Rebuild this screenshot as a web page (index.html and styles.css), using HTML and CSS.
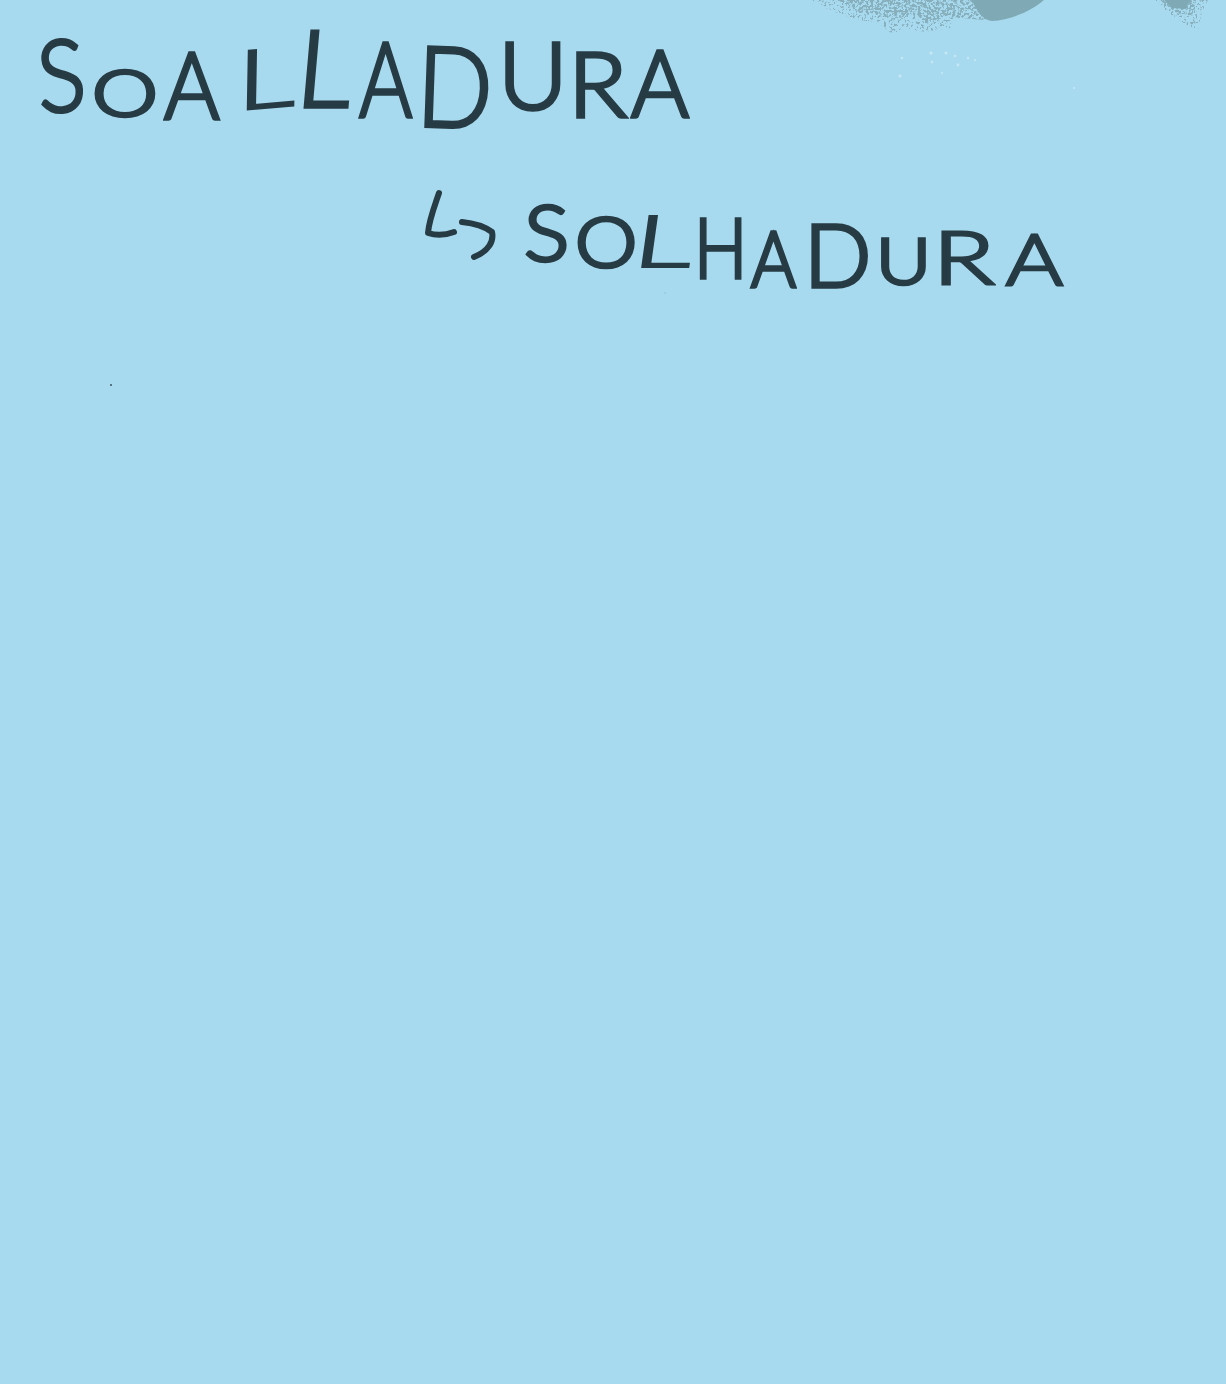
FILE: index.html
```html
<!DOCTYPE html>
<html lang="pt">
<head>
<meta charset="utf-8">
<title>Soalladura</title>
<link rel="stylesheet" href="styles.css">
</head>
<body>
<main class="sheet">
  <svg class="marks" width="1226" height="1384" viewBox="0 0 1226 1384" aria-hidden="true">
    <defs>
      <filter id="speckle" x="-10%" y="-10%" width="120%" height="120%">
        <feTurbulence type="fractalNoise" baseFrequency="0.38" numOctaves="2" seed="4" result="n"/>
        <feColorMatrix in="n" type="matrix" values="0 0 0 0 0  0 0 0 0 0  0 0 0 0 0  0 0 0 9 -4.2" result="m"/>
        <feComposite in="SourceGraphic" in2="m" operator="in"/>
      </filter>
      <filter id="speckle-fine" x="-10%" y="-10%" width="120%" height="120%">
        <feTurbulence type="fractalNoise" baseFrequency="0.45" numOctaves="2" seed="9" result="n"/>
        <feColorMatrix in="n" type="matrix" values="0 0 0 0 0  0 0 0 0 0  0 0 0 0 0  0 0 0 9 -5" result="m"/>
        <feComposite in="SourceGraphic" in2="m" operator="in"/>
      </filter>
    </defs>
    <g class="stain" filter="url(#speckle)">
      <path d="M838 0H1000L985 20L960 18L945 16L925 24L915 12L895 20L880 14L860 12Z"/>
      <path d="M1160 0H1196L1192 16L1175 12Z"/>
    </g>
    <g class="stain" filter="url(#speckle-fine)">
      <path d="M812 0H960L950 28L925 32L905 28L892 34L880 24L850 18L825 8Z"/>
      <path d="M1155 0H1208L1202 12L1198 30L1185 24L1170 14Z"/>
    </g>
    <path class="stain-core" d="M972 0H1044C1032 11 1010 20 992 21C982 20 976 10 972 0Z"/>
    <path class="stain-core" d="M1164 0H1190L1186 9L1172 8Z"/>
    <g class="flecks">
      <circle cx="931" cy="53" r="1.6"/><circle cx="946" cy="53" r="1.5"/><circle cx="955" cy="56" r="1.3"/>
      <circle cx="968" cy="58" r="1.2"/><circle cx="902" cy="58" r="1.3"/><circle cx="932" cy="62" r="1.2"/>
      <circle cx="958" cy="65" r="1.4"/><circle cx="975" cy="60" r="1"/><circle cx="900" cy="76" r="1.5"/>
      <circle cx="942" cy="73" r="1"/><circle cx="1074" cy="88" r="1"/>
    </g>
    <circle class="dot" cx="111" cy="385" r="0.9"/>
    <circle class="dot-faint" cx="665" cy="293" r="0.7"/>
    <g class="arrow">
      <path d="M439 193C435 205 429 220 428 233C437 236 446 235 454 232"/>
      <path d="M462 222C472 223 484 226 492 232C494 241 489 251 474 257"/>
    </g>
  </svg>

  <h1 class="word">
    <span class="g a1">S</span><span class="g a2">O</span><span class="g a3">A</span><span class="g a4">L</span><span class="g a5">L</span><span class="g a6">A</span><span class="g a7">D</span><span class="g a8">U</span><span class="g a9">R</span><span class="g a10">A</span>
  </h1>
  <h2 class="word">
    <span class="g b1">S</span><span class="g b2">O</span><span class="g b3">L</span><span class="g b4">H</span><span class="g b5">A</span><span class="g b6">D</span><span class="g b7">U</span><span class="g b8">R</span><span class="g b9">A</span>
  </h2>
</main>
</body>
</html>
```
FILE: styles.css
```css
html, body { margin: 0; padding: 0; background: #a8daef; }
.sheet { position: relative; width: 1226px; height: 1384px; overflow: hidden; background: #a8daef; }
.marks { position: absolute; left: 0; top: 0; }
.stain path { fill: #86aebb; }
.stain-core { fill: #7fa9b5; }
.flecks circle { fill: #c6e8f6; }
.dot { fill: #30464f; }
.dot-faint { fill: #8fb9c9; }
.arrow path { fill: none; stroke: #263b44; stroke-width: 6; stroke-linecap: round; stroke-linejoin: round; }

.word { margin: 0; font: inherit; }
.g {
  position: absolute;
  font-family: Lato, "Open Sans", sans-serif;
  font-weight: 300;
  line-height: 1;
  color: #263b44;
  -webkit-text-stroke: 3.6px #263b44;
  transform-origin: left center;
}

/* SOALLADURA: each letter sits on the sheet where it was written */
.a1  { left: 37px;  top: 24px; font-size: 100px; transform: rotate(-4deg) scaleX(.9); }
.a2  { left: 92px;  top: 60px; font-size: 64px;  transform: scaleX(1.3); }
.a3  { left: 164px; top: 37px; font-size: 93px;  transform: scaleX(.91); }
.a4  { left: 237px; top: 37px; font-size: 82px;  -webkit-text-stroke-width: 2.4px; transform: rotate(-5deg) skewX(-6deg) scaleX(1.4); }
.a5  { left: 298px; top: 12px; font-size: 107px; transform: skewX(-5deg); }
.a6  { left: 359px; top: 25px; font-size: 104px; transform: scaleX(.78); }
.a7  { left: 417px; top: 27px; font-size: 112px; transform: rotate(2deg) scaleX(.89); }
.a8  { left: 498px; top: 27px; font-size: 93px;  transform: scaleX(1.03); }
.a9  { left: 568px; top: 37px; font-size: 90px;  transform: scaleX(1.08); }
.a10 { left: 631px; top: 35px; font-size: 93px;  transform: scaleX(.95); }

/* SOLHADURA */
.b1 { left: 524px;  top: 193px; font-size: 77px; transform: scaleX(1.1); }
.b2 { left: 575px;  top: 206px; font-size: 69px; transform: scaleX(1.14); }
.b3 { left: 635px;  top: 203px; font-size: 72px; -webkit-text-stroke-width: 2.2px; transform: skewX(-8deg) scaleX(1.6); }
.b4 { left: 694px;  top: 205px; font-size: 82px; transform: scaleX(.86); }
.b5 { left: 751px;  top: 220px; font-size: 76px; transform: scaleX(.9); }
.b6 { left: 804px;  top: 211px; font-size: 86px; transform: scaleX(1.03); }
.b7 { left: 876px;  top: 228px; font-size: 64px; transform: scaleX(1.18); }
.b8 { left: 933px;  top: 220px; font-size: 72px; -webkit-text-stroke-width: 3px; transform: scaleX(1.4); }
.b9 { left: 1006px; top: 222px; font-size: 71px; -webkit-text-stroke-width: 3px; transform: scaleX(1.22); }
```
